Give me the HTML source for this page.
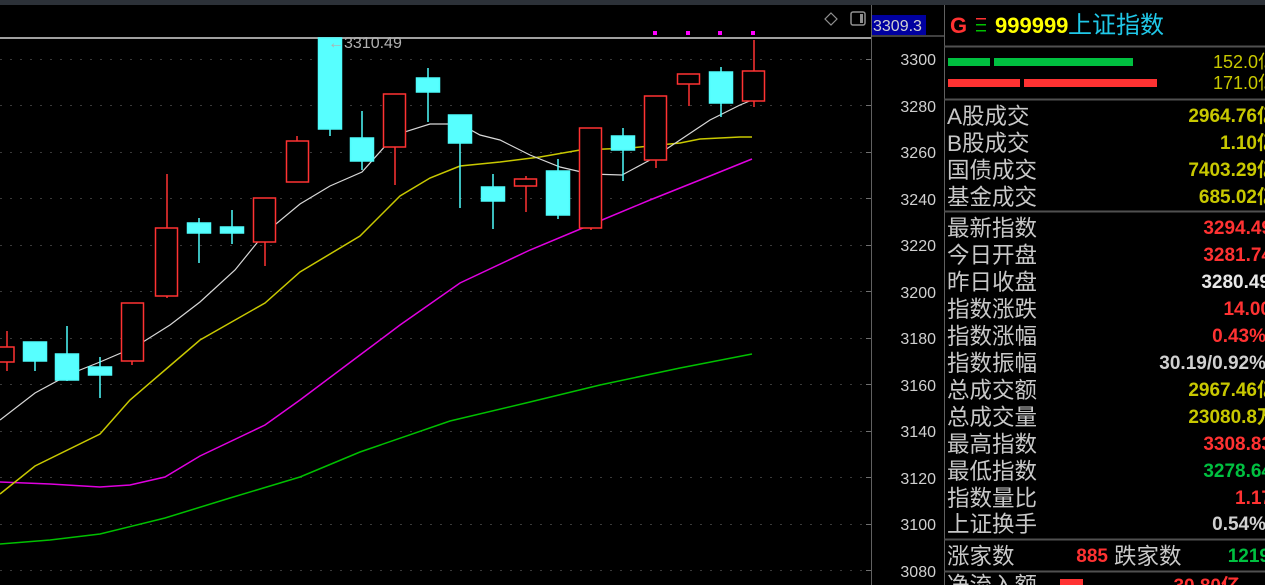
<!DOCTYPE html>
<html><head><meta charset="utf-8"><style>
html,body{margin:0;padding:0;background:#000;width:1265px;height:585px;overflow:hidden}
svg{display:block}
.l{font-family:"Liberation Sans","Noto Sans CJK SC",sans-serif;font-size:22.5px;fill:#c8c8c8}
.v{font-family:"Liberation Sans","Noto Sans CJK SC",sans-serif;font-size:19px;font-weight:bold;text-anchor:end}
.ax{font-family:"Liberation Sans",sans-serif;font-size:16px;fill:#d0d0d0;text-anchor:end}
</style></head><body>
<svg width="1265" height="585" viewBox="0 0 1265 585" xmlns="http://www.w3.org/2000/svg">
<rect width="1265" height="585" fill="#000"/>
<rect x="0" y="0" width="1265" height="5" fill="#2c3138"/>
<g stroke="#3a3a3a" stroke-width="1" stroke-dasharray="2 8">
<line x1="0" y1="59.5" x2="866" y2="59.5"/><line x1="0" y1="105.5" x2="866" y2="105.5"/>
<line x1="0" y1="152.5" x2="866" y2="152.5"/><line x1="0" y1="198.5" x2="866" y2="198.5"/>
<line x1="0" y1="245.5" x2="866" y2="245.5"/><line x1="0" y1="291.5" x2="866" y2="291.5"/>
<line x1="0" y1="338.5" x2="866" y2="338.5"/><line x1="0" y1="384.5" x2="866" y2="384.5"/>
<line x1="0" y1="431.5" x2="866" y2="431.5"/><line x1="0" y1="477.5" x2="866" y2="477.5"/>
<line x1="0" y1="524.5" x2="866" y2="524.5"/><line x1="0" y1="570.5" x2="866" y2="570.5"/>
</g>
<line x1="0" y1="38" x2="871" y2="38" stroke="#a0a0a0" stroke-width="2"/>
<line x1="871.5" y1="5" x2="871.5" y2="585" stroke="#606060"/>
<line x1="944.5" y1="5" x2="944.5" y2="585" stroke="#606060"/>
<g stroke="#707070"><line x1="866" y1="59.5" x2="871" y2="59.5"/><line x1="866" y1="105.5" x2="871" y2="105.5"/><line x1="866" y1="152.5" x2="871" y2="152.5"/><line x1="866" y1="198.5" x2="871" y2="198.5"/><line x1="866" y1="245.5" x2="871" y2="245.5"/><line x1="866" y1="291.5" x2="871" y2="291.5"/><line x1="866" y1="338.5" x2="871" y2="338.5"/><line x1="866" y1="384.5" x2="871" y2="384.5"/><line x1="866" y1="431.5" x2="871" y2="431.5"/><line x1="866" y1="477.5" x2="871" y2="477.5"/><line x1="866" y1="524.5" x2="871" y2="524.5"/><line x1="866" y1="570.5" x2="871" y2="570.5"/></g>
<g class="ax">
<text x="936" y="65">3300</text><text x="936" y="112">3280</text><text x="936" y="158">3260</text><text x="936" y="205">3240</text><text x="936" y="251">3220</text><text x="936" y="298">3200</text><text x="936" y="344">3180</text><text x="936" y="391">3160</text><text x="936" y="437">3140</text><text x="936" y="484">3120</text><text x="936" y="530">3100</text><text x="936" y="577">3080</text>
</g>
<rect x="872" y="15" width="54" height="20" fill="#0000a0"/>
<text x="873" y="31" style="font-family:'Liberation Sans',sans-serif;font-size:16px;fill:#d0d0d0">3309.3</text>
<line x1="871" y1="36" x2="944" y2="36" stroke="#808080"/>
<path d="M831 13 L837 19 L831 25 L825 19 Z" fill="none" stroke="#909090" stroke-width="1.2"/>
<rect x="851" y="12" width="14" height="13" rx="2" fill="none" stroke="#909090" stroke-width="1.5"/>
<rect x="860" y="14" width="3" height="9" fill="#909090"/>
<g fill="#ff00ff"><rect x="653" y="31" width="4" height="4"/><rect x="686" y="31" width="4" height="4"/><rect x="718" y="31" width="4" height="4"/><rect x="751" y="31" width="4" height="4"/></g>
<polyline fill="none" stroke="#00c000" stroke-width="1.5" points="0,544 50,540 100,534 165,518 230,498 300,477 360,452 450,421 530,402 600,385 680,368 752,354"/>
<polyline fill="none" stroke="#e000e0" stroke-width="1.5" points="0,482 50,484 100,487 130,485 165,477 200,456 265,425 300,400 360,355 400,325 460,283 530,250 590,225 650,200 700,180 752,159"/>
<polyline fill="none" stroke="#c8c800" stroke-width="1.5" points="0,494 35,466 100,434 130,400 165,370 200,340 265,303 300,272 360,236 400,196 430,178 460,166 500,162 540,157 580,150 630,148 680,143 700,139 740,137 752,137"/>
<polyline fill="none" stroke="#d8d8d8" stroke-width="1.2" points="0,420 35,393 70,374 100,362 135,347 170,325 200,302 235,270 265,233 300,204 330,186 362,172 395,135 430,124 460,124 480,135 500,140 530,155 560,167 590,174 622,175 650,160 680,140 710,120 740,105 752,100"/>
<g stroke="#ff3232" stroke-width="1.5" fill="#000">
<line x1="7" y1="331" x2="7" y2="371"/><rect x="-5" y="347" width="19" height="15"/>
<line x1="132" y1="361" x2="132" y2="365"/><rect x="121.5" y="303" width="22" height="58"/>
<line x1="167" y1="174" x2="167" y2="298"/><rect x="155.5" y="228" width="22" height="68"/>
<line x1="265" y1="242" x2="265" y2="266"/><rect x="253.5" y="198" width="22" height="44"/>
<line x1="297" y1="136" x2="297" y2="141"/><rect x="286.5" y="141" width="22" height="41"/>
<line x1="395" y1="147" x2="395" y2="185"/><rect x="383.5" y="94" width="22" height="53"/>
<line x1="526" y1="176" x2="526" y2="212"/><rect x="514.5" y="179" width="22" height="7"/>
<line x1="591" y1="228" x2="591" y2="230"/><rect x="579.5" y="128" width="22" height="100"/>
<line x1="656" y1="160" x2="656" y2="168"/><rect x="644.5" y="96" width="22" height="64"/>
<line x1="689" y1="84" x2="689" y2="106"/><rect x="677.5" y="74" width="22" height="10"/>
<line x1="754" y1="40" x2="754" y2="107"/><rect x="742.5" y="71" width="22" height="30"/>
</g>
<g stroke="#4ffcfc" stroke-width="1.5" fill="#57ffff">
<line x1="35" y1="342" x2="35" y2="371"/><rect x="23.5" y="342" width="23" height="19"/>
<line x1="67" y1="326" x2="67" y2="381"/><rect x="55.5" y="354" width="23" height="26"/>
<line x1="100" y1="357" x2="100" y2="398"/><rect x="88.5" y="367" width="23" height="8"/>
<line x1="199" y1="218" x2="199" y2="263"/><rect x="187.5" y="223" width="23" height="10"/>
<line x1="232" y1="210" x2="232" y2="244"/><rect x="220.5" y="227" width="23" height="6"/>
<line x1="330" y1="38" x2="330" y2="136"/><rect x="318.5" y="38" width="23" height="91"/>
<line x1="362" y1="111" x2="362" y2="170"/><rect x="350.5" y="138" width="23" height="23"/>
<line x1="428" y1="68" x2="428" y2="122"/><rect x="416.5" y="78" width="23" height="14"/>
<line x1="460" y1="115" x2="460" y2="208"/><rect x="448.5" y="115" width="23" height="28"/>
<line x1="493" y1="174" x2="493" y2="229"/><rect x="481.5" y="187" width="23" height="14"/>
<line x1="558" y1="159" x2="558" y2="219"/><rect x="546.5" y="171" width="23" height="44"/>
<line x1="623" y1="128" x2="623" y2="181"/><rect x="611.5" y="136" width="23" height="14"/>
<line x1="721" y1="67" x2="721" y2="117"/><rect x="709.5" y="72" width="23" height="31"/>
</g>
<text x="328" y="48" style="font-family:'Liberation Sans',sans-serif;font-size:16px;fill:#b0b0b0">←3310.49</text>
<line x1="944" y1="46.5" x2="1265" y2="46.5" stroke="#505050" stroke-width="2"/>
<line x1="944" y1="99.5" x2="1265" y2="99.5" stroke="#505050" stroke-width="2"/>
<line x1="944" y1="211.5" x2="1265" y2="211.5" stroke="#505050" stroke-width="2"/>
<line x1="944" y1="539.5" x2="1265" y2="539.5" stroke="#505050" stroke-width="2"/>
<line x1="944" y1="571.5" x2="1265" y2="571.5" stroke="#505050" stroke-width="2"/>
<text x="950" y="33" style="font-family:'Liberation Sans',sans-serif;font-size:22px;font-weight:bold;fill:#ff3232">G</text>
<rect x="976" y="18" width="10" height="1.5" fill="#ff3232"/><rect x="976" y="24" width="10" height="1.5" fill="#00c000"/><rect x="976" y="30" width="10" height="1.5" fill="#00c000"/>
<text x="995" y="33" style="font-family:'Liberation Sans',sans-serif;font-size:22px;font-weight:bold;fill:#ffff00">999999</text>
<text x="1068" y="33" style="font-family:'Liberation Sans','Noto Sans CJK SC',sans-serif;font-size:24px;fill:#20c8e8">上证指数</text>
<rect x="948" y="58" width="42" height="8" fill="#00c040"/><rect x="994" y="58" width="139" height="8" fill="#00c040"/>
<rect x="948" y="79" width="72" height="8" fill="#ff3232"/><rect x="1024" y="79" width="133" height="8" fill="#ff3232"/>
<text class="v" x="1276" y="68" style="font-weight:normal;fill:#c8c800;font-size:18px">152.0亿</text>
<text class="v" x="1276" y="89" style="font-weight:normal;fill:#c8c800;font-size:18px">171.0亿</text>
<g class="l">
<text x="947" y="124">A股成交</text><text x="947" y="151"> B股成交</text><text x="947" y="178">国债成交</text><text x="947" y="205">基金成交</text>
<text x="947" y="236">最新指数</text><text x="947" y="263">今日开盘</text><text x="947" y="290">昨日收盘</text><text x="947" y="317">指数涨跌</text><text x="947" y="344">指数涨幅</text><text x="947" y="371">指数振幅</text><text x="947" y="398">总成交额</text><text x="947" y="425">总成交量</text><text x="947" y="452">最高指数</text><text x="947" y="479">最低指数</text><text x="947" y="506">指数量比</text><text x="947" y="532">上证换手</text>
<text x="947" y="564">涨家数</text><text x="1114" y="564">跌家数</text><text x="947" y="593">净流入额</text>
</g>
<g class="v">
<text x="1276" y="122" fill="#c8c800">2964.76亿</text><text x="1276" y="149" fill="#c8c800">1.10亿</text><text x="1276" y="176" fill="#c8c800">7403.29亿</text><text x="1276" y="203" fill="#c8c800">685.02亿</text>
<text x="1272" y="234" fill="#ff3232">3294.49</text><text x="1272" y="261" fill="#ff3232">3281.74</text><text x="1270" y="288" fill="#e8e8e8">3280.49</text><text x="1271" y="315" fill="#ff3232">14.00</text><text x="1266" y="342" fill="#ff3232">0.43%</text><text x="1266" y="369" fill="#d0d0d0">30.19/0.92%</text>
<text x="1276" y="396" fill="#c8c800">2967.46亿</text><text x="1276" y="423" fill="#c8c800">23080.8万</text><text x="1272" y="450" fill="#ff3232">3308.83</text><text x="1272" y="477" fill="#00c040">3278.64</text><text x="1272" y="504" fill="#ff3232">1.17</text><text x="1266" y="530" fill="#d0d0d0">0.54%</text>
<text x="1108" y="562" fill="#ff3232">885</text><text x="1270" y="562" fill="#00c040">1219</text>
<text x="1240" y="592" fill="#ff3232">-30.80亿</text>
</g>
<rect x="1060" y="579" width="23" height="6" fill="#ff3232"/>
</svg>
</body></html>
